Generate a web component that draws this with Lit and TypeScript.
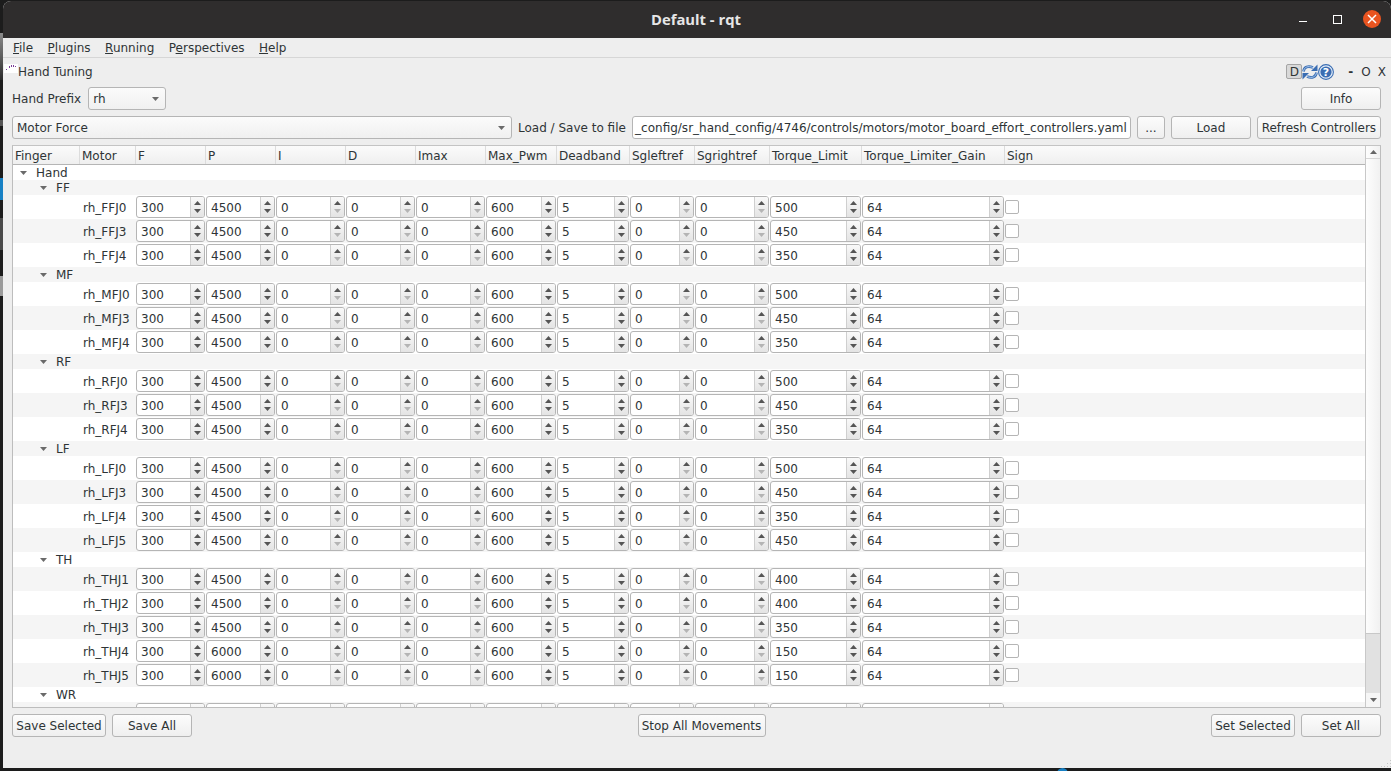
import { LitElement, html, css, svg } from "lit";
import { customElement } from "lit/decorators.js";

const COLS = [67, 56, 70, 70, 70, 70, 70, 71, 73, 65, 75, 92, 143, 361];
const HEADS = ["Finger","Motor","F","P","I","D","Imax","Max_Pwm","Deadband","Sgleftref","Sgrightref","Torque_Limit","Torque_Limiter_Gain","Sign"];

type J = [string, string, string];
const groups: { name: string; joints: J[] }[] = [
  { name: "FF", joints: [["rh_FFJ0","4500","500"],["rh_FFJ3","4500","450"],["rh_FFJ4","4500","350"]] },
  { name: "MF", joints: [["rh_MFJ0","4500","500"],["rh_MFJ3","4500","450"],["rh_MFJ4","4500","350"]] },
  { name: "RF", joints: [["rh_RFJ0","4500","500"],["rh_RFJ3","4500","450"],["rh_RFJ4","4500","350"]] },
  { name: "LF", joints: [["rh_LFJ0","4500","500"],["rh_LFJ3","4500","450"],["rh_LFJ4","4500","350"],["rh_LFJ5","4500","450"]] },
  { name: "TH", joints: [["rh_THJ1","4500","400"],["rh_THJ2","4500","400"],["rh_THJ3","4500","350"],["rh_THJ4","6000","150"],["rh_THJ5","6000","150"]] },
  { name: "WR", joints: [["","",""]] },
];

const tri = (down: boolean) => svg`<svg class="tri" width="7" height="4" viewBox="0 0 7 4"><path d="${down ? "M0 0H7L3.5 4Z" : "M0 4H7L3.5 0Z"}" fill="currentColor"/></svg>`;

@customElement("app-root")
export class AppRoot extends LitElement {
  static styles = css`
    :host { display: block; width: 1391px; height: 771px; background: #1c1c1c; overflow: hidden; position: relative;
      font-family: "DejaVu Sans", sans-serif; font-size: 12px; color: #2e3436; }
    .desk { height: 771px; padding: 1px 0 3px 3px; box-sizing: border-box; }
    .patch { position: absolute; left: 0; width: 3px; }
    .p1 { top: 33px; height: 47px; background: linear-gradient(#8a8a8a, #555 60%, #2a2a2a); }
    .p2 { top: 120px; height: 6px; background: #555; }
    .p3 { top: 178px; height: 22px; background: #1780c4; }
    .p4 { top: 218px; height: 32px; background: #4a4a4a; }
    .p5 { top: 276px; height: 20px; background: #9a9a9a; }
    .dot { position: absolute; left: 1057px; top: 768px; width: 11px; height: 11px; border-radius: 50%; background: #1780c4; }
    .grip { position: absolute; right: 0; bottom: 0; }
    .win { height: 767px; background: #eeeeee; border-radius: 8px 8px 0 0; overflow: hidden; display: flex; flex-direction: column; position: relative; }
    .title { height: 36px; padding: 0 2px 1px 0; flex: none; background: #2f2d2d; color: #e6e6e6; display: flex; align-items: center; justify-content: center; position: relative;
      font-family: "Open Sans", "Noto Sans", sans-serif; font-weight: 700; font-size: 14.8px; }
    .wbtns { position: absolute; right: 0; top: 0; height: 36px; display: flex; align-items: center; }
    .wbtn { display: flex; align-items: center; justify-content: center; }
    .min { width: 8px; height: 1px; margin-top: 4px; border-bottom: 1px solid #fff; }
    .max { width: 7px; height: 7px; border: 1px solid #fff; margin-left: 26px; }
    .close { width: 18px; height: 18px; border-radius: 50%; background: #e95420; margin: 0 10px 0 21px; }
    .menubar { height: 19px; flex: none; display: flex; align-items: center; padding-left: 10px; gap: 14.5px; border-bottom: 1px solid #d6d6d6; background: #eeeeee; }
    u { text-underline-offset: 1px; }
    .content { flex: 1; display: flex; flex-direction: column; padding: 0 10px 0 9px; min-height: 0; }
    .dock { height: 27px; flex: none; display: flex; align-items: center; margin: 0 -10px 0 -9px; padding-right: 5px; }
    .dockicon { width: 14px; height: 14px; margin: 0 0 1px 1px; flex: none; }
    .docktitle { flex: 1; }
    .dbtn { width: 14px; height: 13px; border: 1px solid #a5a5a5; border-radius: 2px; background: #d9d9d9; display: flex; align-items: center; justify-content: center; }
    .m1 { margin-left: 14px; font-weight: 700; }
    .m2 { margin-left: 8px; }
    .m3 { margin-left: 7px; }
    .row { display: flex; align-items: center; flex: none; }
    .r1 { height: 23px; gap: 7px; margin-top: 2px; }
    .btn { height: 21px; border: 1px solid #b5b5b5; border-radius: 3px; background: linear-gradient(#fcfcfc, #efefef); display: flex; align-items: center; justify-content: center; flex: none; white-space: nowrap; }
    .combo { height: 21px; border: 1px solid #b5b5b5; border-radius: 3px; background: linear-gradient(#fbfbfb, #f0f0f0); display: flex; align-items: center; justify-content: space-between; padding: 0 6px 0 4px; flex: none; }
    .w66 { width: 66px; } .w78 { width: 78px; } .w488 { width: 488px; } .w26 { width: 26px; } .w122 { width: 122px; } .w92 { width: 92px; } .w126 { width: 126px; } .w82 { width: 82px; }
    .spacer { flex: 1; }
    .r2 { height: 23px; margin-top: 6px; gap: 6px; }
    .nw { white-space: nowrap; flex: none; }
    .line { width: 490px; height: 21px; background: #fff; border: 1px solid #b5b5b5; border-radius: 3px; display: flex; align-items: center; justify-content: flex-end; padding: 0 3px 0 4px; flex: none; white-space: nowrap; overflow: hidden; }
    .table { margin-top: 6px; height: 561px; flex: none; border: 1px solid #bdbdbd; border-top-color: #c4c4c4; background: #fff; display: flex; overflow: hidden; }
    .view { flex: 1; min-width: 0; display: flex; flex-direction: column; }
    .thead { height: 18px; flex: none; display: flex; background: linear-gradient(#fbfbfb, #efefef); border-bottom: 1px solid #b5b5b5; }
    .th { box-sizing: border-box; border-right: 1px solid #dcdcdc; padding: 1px 0 0 2px; line-height: 18px; flex: none; white-space: nowrap; overflow: hidden; }
    .tbody { flex: 1; overflow: hidden; }
    .tr { display: flex; align-items: center; }
    .tr.alt { background: #f5f5f5; }
    .tr.grp { height: 15px; }
    .tr.j { height: 24px; }
    .arrow { color: #6a6a6a; display: flex; flex: none; width: 7px; height: 4px; }
    .lab { flex: none; }
    .hand { padding-left: 7px; }
    .fing { padding-left: 27px; }
    .grp .arrow { margin-right: 9px; }
    .mot { flex: none; width: 123px; padding: 1px 0 0 70px; box-sizing: border-box; white-space: nowrap; }
    .spin { box-sizing: border-box; flex: none; height: 22px; margin-right: 1px; border: 1px solid #b5b5b5; border-radius: 3px; background: #fff; display: flex; overflow: hidden; }
    .sv { flex: 1; padding: 1px 0 0 4px; line-height: 20px; min-width: 0; }
    .sb { width: 13px; flex: none; background: linear-gradient(#f9f9f9, #e4e4e4); border-left: 1px solid #cfcfcf; display: flex; flex-direction: column; align-items: center; justify-content: center; gap: 4px; color: #555; }
    .sb .off { color: #b4b4b4; display: flex; }
    .sb .on { display: flex; }
    .tri { display: block; }
    .chk { width: 12px; height: 12px; border: 1px solid #b5b5b5; border-radius: 2px; background: #fff; flex: none; }
    .sbar { width: 14px; flex: none; border-left: 1px solid #c8c8c8; background: linear-gradient(90deg, #fdfdfd, #f1f1f1); display: flex; flex-direction: column; }
    .sup, .sdn { flex: none; display: flex; align-items: center; justify-content: center; color: #666; }
    .sup { height: 12px; border-bottom: 1px solid #d6d6d6; }
    .sdn { height: 14px; background: #f6f6f6; }
    .sthumb { height: 474px; flex: none; }
    .sgroove { flex: 1; background: #e1e1e1; border-top: 1px solid #c8c8c8; }
    .bot { height: 23px; gap: 6px; margin-top: 6px; }
  `;

  spin(w: number, v: string, downOff: boolean) {
    return html`<div class="spin" style="width:${w - 1}px"><div class="sv">${v}</div><div class="sb"><span class="on">${tri(false)}</span><span class=${downOff ? "off" : "on"}>${tri(true)}</span></div></div>`;
  }

  jointRow(j: J, alt: boolean) {
    const clipped = j[0] === "";
    const vals = ["300", j[1], "0", "0", "0", "600", "5", "0", "0", j[2], "64"];
    return html`<div class="tr j ${alt ? "alt" : ""}">
      <div class="mot">${j[0]}</div>
      ${vals.map((v, i) => this.spin(COLS[i + 2], clipped ? "" : v, v === "0"))}
      ${clipped ? "" : html`<div class="chk"></div>`}
    </div>`;
  }

  render() {
    let n = 1;
    const alt = () => n++ % 2 === 1;
    return html`<div class="desk">
      <div class="patch p1"></div><div class="patch p2"></div><div class="patch p3"></div><div class="patch p4"></div><div class="patch p5"></div>
      <div class="dot"></div>
      <div class="win">
      <div class="title">Default - rqt
        <div class="wbtns">
          <div class="wbtn min"></div>
          <div class="wbtn max"></div>
          <div class="wbtn close"><svg width="10" height="10" viewBox="0 0 10 10"><path d="M1 1L9 9M9 1L1 9" stroke="#fff" stroke-width="1.5"/></svg></div>
        </div>
      </div>
      <div class="menubar">
        <span><u>F</u>ile</span><span><u>P</u>lugins</span><span><u>R</u>unning</span><span>P<u>e</u>rspectives</span><span><u>H</u>elp</span>
      </div>
      <div class="content">
        <div class="dock">
          <svg class="dockicon" viewBox="0 0 14 14"><rect x="0" y="0" width="14" height="9" fill="#fff"/><g fill="#7a3f98"><rect x="2" y="5" width="1" height="1"/><rect x="5" y="2" width="1" height="2"/><rect x="7" y="1" width="1" height="2"/><rect x="9" y="1" width="1" height="2"/><rect x="11" y="2" width="1" height="1"/></g></svg>
          <div class="docktitle">Hand Tuning</div>
          <div class="dbtn">D</div>
          <svg width="16" height="16" viewBox="0 0 16 16"><g fill="none" stroke="#3a6db2" stroke-width="2.6"><path d="M1.5 7.5C2 3 6 1.5 11 3.5"/><path d="M14.5 8.5C14 13 10 14.5 5 12.5"/></g><g fill="none" stroke="#a9c9ef" stroke-width="1"><path d="M1.5 7.5C2 3 6 1.5 11 3.5"/><path d="M14.5 8.5C14 13 10 14.5 5 12.5"/></g><path d="M15.5 .5V7H9z" fill="#3a6db2"/><path d="M.5 15.5V9H7z" fill="#3a6db2"/></svg>
          <svg width="16" height="16" viewBox="0 0 16 16"><circle cx="8" cy="8" r="7.4" fill="#e4edf8" stroke="#3a6db2" stroke-width="1.1"/><circle cx="8" cy="8" r="5.6" fill="#3a6db2"/><text x="8" y="12" text-anchor="middle" font-size="11" font-weight="700" fill="#fff" font-family="DejaVu Sans">?</text></svg>
          <span class="m1">-</span><span class="m2">O</span><span class="m3">X</span>
        </div>
        <div class="row r1">
          <span>Hand Prefix</span>
          <div class="combo w66">rh<span class="arrow">${tri(true)}</span></div>
          <div class="spacer"></div>
          <div class="btn w78">Info</div>
        </div>
        <div class="row r2">
          <div class="combo w488">Motor Force<span class="arrow">${tri(true)}</span></div>
          <span class="nw">Load / Save to file</span>
          <div class="line">_config/sr_hand_config/4746/controls/motors/motor_board_effort_controllers.yaml</div>
          <div class="btn w26">...</div>
          <div class="btn w78">Load</div>
          <div class="btn w122">Refresh Controllers</div>
        </div>
        <div class="table">
          <div class="view">
            <div class="thead">${HEADS.map((h, i) => html`<div class="th" style="width:${COLS[i]}px">${h}</div>`)}</div>
            <div class="tbody">
              <div class="tr grp hand"><span class="arrow">${tri(true)}</span><span class="lab">Hand</span></div>
              ${groups.map(g => html`
                <div class="tr grp fing ${alt() ? "alt" : ""}"><span class="arrow">${tri(true)}</span><span class="lab">${g.name}</span></div>
                ${g.joints.map(j => this.jointRow(j, alt()))}
              `)}
            </div>
          </div>
          <div class="sbar">
            <div class="sup">${tri(false)}</div>
            <div class="sthumb"></div>
            <div class="sgroove"></div>
            <div class="sdn">${tri(true)}</div>
          </div>
        </div>
        <div class="row bot">
          <div class="btn w92">Save Selected</div>
          <div class="btn w78">Save All</div>
          <div class="spacer"></div>
          <div class="btn w126">Stop All Movements</div>
          <div class="spacer"></div>
          <div class="btn w82">Set Selected</div>
          <div class="btn w78">Set All</div>
        </div>
      </div>
      <svg class="grip" width="11" height="14" viewBox="0 0 11 14"><g fill="#c4c4c4"><rect x="1" y="12" width="1" height="1"/><rect x="4" y="12" width="1" height="1"/><rect x="7" y="12" width="1" height="1"/><rect x="10" y="12" width="1" height="1"/><rect x="7" y="9" width="1" height="1"/><rect x="10" y="9" width="1" height="1"/><rect x="10" y="6" width="1" height="1"/></g></svg>
    </div></div>`;
  }
}
